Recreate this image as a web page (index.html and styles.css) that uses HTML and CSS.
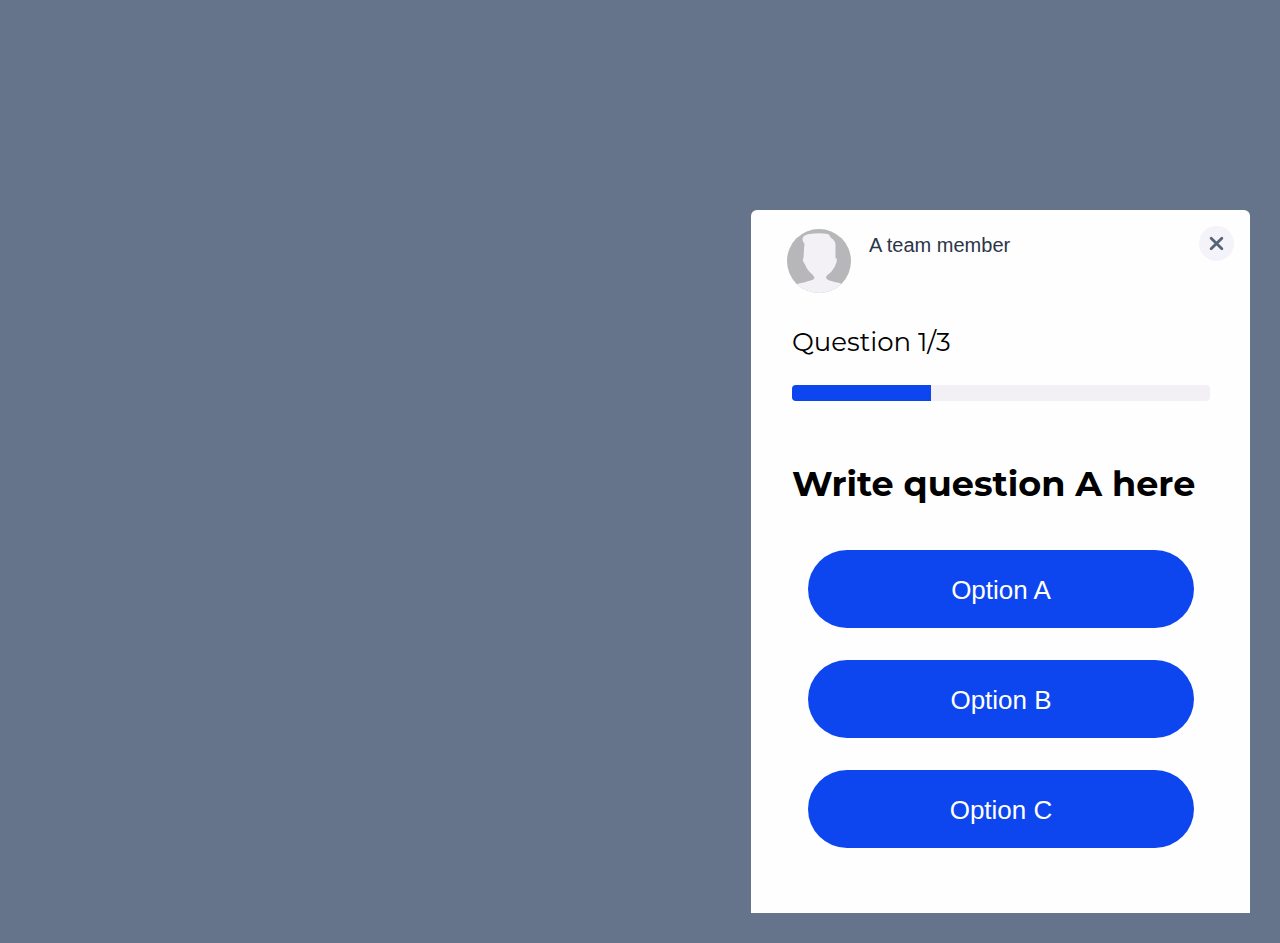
FILE: index.html
```
<!DOCTYPE html>
<html lang="en">
<head>
  <meta charset="UTF-8" />
  <meta name="viewport" content="width=device-width, initial-scale=1.0" />
  <title>Survey</title>
  <link rel="stylesheet" href="styles.css">
</head>
<body>
  <main class="survey">
    <header class="survey-header">
      <svg class="avatar" viewBox="0 0 64 64" aria-hidden="true">
        <defs>
          <clipPath id="avatar-clip"><circle cx="32" cy="32" r="32" /></clipPath>
        </defs>
        <g clip-path="url(#avatar-clip)">
          <rect width="64" height="64" fill="#b7b6b8" />
          <path fill="#f3f1f5" d="M15.500 10 C15.500 7.500 18 6 21 5.300 C28 4 35 3.800 41 5 C42.500 5.500 43 7.500 44 9 C47 10.500 48.500 13 48.500 16 L48.500 29 C50.500 29.500 50 32 49 34.500 C48 37.500 46.500 40 44.500 42.500 C42.500 44.500 40 46 39 48 C39 50.500 42 51.500 46 52.500 C50 53.500 53.500 54 56 55.500 L56 64 H8 V56 C12 54 16 54 20 52.500 C24 51.500 27.500 50.500 27.500 48.500 C26.500 46 22.500 43.500 20 39.500 C18.500 37.500 18.500 35.500 17 34 C15.500 32 15.500 30 16.500 29 L17 20 C17 18 17.500 17 17.500 15 C17 13.500 15.500 12.500 15.500 10 Z" />
        </g>
      </svg>
      <span class="member">A team member</span>
      <button class="close-button" type="button" aria-label="Close">
        <svg viewBox="0 0 14 14" aria-hidden="true">
          <path d="M2 2 L12 12 M12 2 L2 12" />
        </svg>
      </button>
    </header>

    <section class="question">
      <label class="step" for="survey-progress">Question 1/3</label>
      <progress id="survey-progress" class="progress" value="1" max="3"></progress>
      <h1>Write question A here</h1>
      <div class="options">
        <button class="option" type="button">Option A</button>
        <button class="option" type="button">Option B</button>
        <button class="option" type="button">Option C</button>
      </div>
    </section>
  </main>
</body>
</html>
```
FILE: styles.css
```
* {
  margin: 0;
  padding: 0;
  box-sizing: border-box;
}

body {
  min-height: 100vh;
  display: flex;
  align-items: flex-end;
  justify-content: flex-end;
  padding: 30px;
  background-color: #66748b;
  font-family: Helvetica, "Liberation Sans", Arial, sans-serif;
}

.survey {
  width: 100%;
  max-width: 499px;
  background-color: #fefefe;
  border-radius: 6px 6px 0 0;
}

.survey-header {
  display: flex;
  align-items: flex-start;
  padding: 16px 16px 33px 36px;
}

.avatar {
  width: 64px;
  height: 64px;
  margin-top: 3px;
}

.member {
  flex: 1;
  margin-left: 18px;
  padding-top: 7px;
  font-size: 20px;
  line-height: 24px;
  color: #2b3548;
}

.close-button {
  display: flex;
  align-items: center;
  justify-content: center;
  width: 35px;
  height: 35px;
  border: none;
  border-radius: 50%;
  background-color: #f4f3fa;
  cursor: pointer;
}

.close-button svg {
  width: 15px;
  height: 15px;
  fill: none;
  stroke: #566376;
  stroke-width: 2.6;
  stroke-linecap: round;
}

.question {
  padding: 0 40px 65px 41px;
}

.step {
  display: block;
  font-family: Montserrat, Inter, sans-serif;
  font-size: 26px;
  line-height: 32px;
  color: #000;
}

.progress {
  display: block;
  width: 100%;
  height: 16px;
  margin-top: 27px;
  border: none;
  border-radius: 4px;
  overflow: hidden;
  background-color: #f2f0f4;
  appearance: none;
  -webkit-appearance: none;
}

.progress::-webkit-progress-bar {
  background-color: #f2f0f4;
}

.progress::-webkit-progress-value {
  background-color: #0d46ef;
}

h1 {
  margin-top: 61px;
  font-family: Montserrat, Inter, sans-serif;
  font-size: 35px;
  font-weight: 700;
  line-height: 44px;
  color: #000;
}

.options {
  display: flex;
  flex-direction: column;
  gap: 32px;
  padding: 0 16px;
  margin-top: 44px;
}

.option {
  height: 78px;
  padding-top: 2px;
  border: none;
  border-radius: 39px;
  background-color: #0d46ef;
  font-family: inherit;
  font-size: 26px;
  color: #fff;
  cursor: pointer;
}
```
